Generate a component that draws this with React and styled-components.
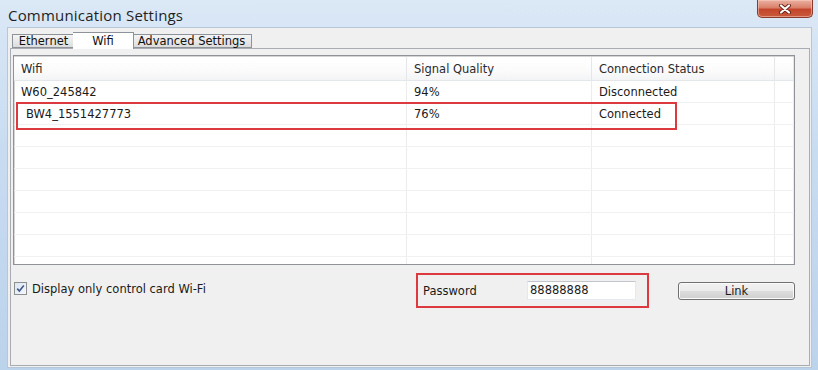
import React from 'react';
import styled, { createGlobalStyle } from 'styled-components';

const GlobalStyle = createGlobalStyle`
    body {
        margin: 0;
        background: #ffffff;
        font-family: "DejaVu Sans", "Liberation Sans", sans-serif;
    }
`

const networks = [
    { name: 'W60_245842', signal: '94%', status: 'Disconnected', indent: 0 },
    { name: 'BW4_1551427773', signal: '76%', status: 'Connected', indent: 5 },
]

function App() {
    const empty = Array.from({ length: 7 });

    return (
        <>
            <GlobalStyle />
            <Window>
                <TitleBar>
                    <Title>Communication Settings</Title>
                    <CloseButton>
                        <svg width="16" height="10" viewBox="0 0 16 10">
                            <path d="M4 1.5 L12 8.5 M12 1.5 L4 8.5" stroke="#6b2114" strokeWidth="4" strokeLinecap="round" />
                            <path d="M4 1.5 L12 8.5 M12 1.5 L4 8.5" stroke="#ffffff" strokeWidth="2.2" strokeLinecap="round" />
                        </svg>
                    </CloseButton>
                </TitleBar>

                <Body>
                    <TabStrip>
                        <Tab $width={63}>Ethernet</Tab>
                        <Tab $width={57} $active>Wifi</Tab>
                        <Tab $width={120}>Advanced Settings</Tab>
                    </TabStrip>

                    <TabPage>
                        <ListView>
                            <HeaderRow>
                                <HeaderCell>Wifi</HeaderCell>
                                <HeaderCell>Signal Quality</HeaderCell>
                                <HeaderCell>Connection Status</HeaderCell>
                                <HeaderCell />
                            </HeaderRow>
                            {networks.map((n) => (
                                <Row key={n.name}>
                                    <Cell $indent={n.indent}>{n.name}</Cell>
                                    <Cell>{n.signal}</Cell>
                                    <Cell>{n.status}</Cell>
                                    <Cell />
                                </Row>
                            ))}
                            {empty.map((_, i) => (
                                <Row key={i}>
                                    <Cell />
                                    <Cell />
                                    <Cell />
                                    <Cell />
                                </Row>
                            ))}
                        </ListView>

                        <BottomRow>
                            <CheckLabel>
                                <CheckBox>
                                    <svg width="9" height="9" viewBox="0 0 9 9">
                                        <path d="M1.2 4.6 L3.4 7 L7.8 1.6" fill="none" stroke="#3f5a8a" strokeWidth="1.6" />
                                    </svg>
                                </CheckBox>
                                Display only control card Wi-Fi
                            </CheckLabel>
                            <FieldLabel>Password</FieldLabel>
                            <TextInput>88888888</TextInput>
                            <Button>Link</Button>
                        </BottomRow>
                    </TabPage>
                </Body>

                {/* red annotation frames */}
                <Highlight style={{ left: 16, top: 102, width: 661, height: 28 }} />
                <Highlight style={{ left: 416, top: 273, width: 233, height: 35 }} />
            </Window>
        </>
    )
}

export default App

const Window = styled.div`
    position: relative;
    width: 818px;
    height: 370px;
    box-sizing: border-box;
    display: flex;
    flex-direction: column;
    background: linear-gradient(180deg, #dbe8f6 0%, #c8dcf1 40%, #bcd3ec 100%);
    padding: 0 6px 2px 7px;
    overflow: hidden;
`

const TitleBar = styled.div`
    height: 27px;
    display: flex;
    align-items: flex-start;
    margin-right: -1px;
`

const Title = styled.div`
    font-family: "Open Sans", "DejaVu Sans", sans-serif;
    font-size: 15px;
    color: #1f1f1f;
    margin-top: 5px;
    margin-left: 1px;
    letter-spacing: 0.2px;
`

const CloseButton = styled.div`
    margin-left: auto;
    width: 56px;
    height: 18px;
    box-sizing: border-box;
    display: flex;
    align-items: center;
    justify-content: center;
    border: 1px solid #8a3a2a;
    border-top: none;
    border-radius: 0 0 5px 5px;
    background: linear-gradient(180deg, #eab2a2 0%, #d9806a 45%, #c4452b 55%, #c85a3c 100%);
    box-shadow: inset 0 0 0 1px rgba(255, 210, 200, 0.5);
`

const Body = styled.div`
    flex: 1;
    display: flex;
    flex-direction: column;
    background: #f0f0f0;
    border: 1px solid #b6c7da;
    padding: 4px 1px 1px 2px;
`

const TabStrip = styled.div`
    display: flex;
    align-items: flex-end;
    height: 16px;
    padding-left: 2px;
    position: relative;
    z-index: 1;
`

const Tab = styled.div`
    width: ${(p) => p.$width + (p.$active ? 4 : 0)}px;
    height: ${(p) => (p.$active ? '17px' : '14px')};
    box-sizing: border-box;
    margin: ${(p) => (p.$active ? '0 -2px -1px' : '0')};
    display: flex;
    align-items: center;
    justify-content: center;
    font-size: 11.5px;
    color: #111;
    border: 1px solid #8e9399;
    border-bottom: ${(p) => (p.$active ? 'none' : '1px solid #8e9399')};
    background: ${(p) => (p.$active ? '#ffffff' : 'linear-gradient(180deg, #f4f4f4 0%, #e9e9e9 50%, #dcdcdc 100%)')};
    z-index: ${(p) => (p.$active ? 2 : 1)};
    & + & {
        border-left: ${(p) => (p.$active ? '1px solid #8e9399' : 'none')};
    }
`

const TabPage = styled.div`
    flex: 1;
    display: flex;
    flex-direction: column;
    border: 1px solid #a9adb3;
    padding: 6px 0 0 2px;
`

const ListView = styled.div`
    width: 782px;
    height: 210px;
    box-sizing: border-box;
    overflow: hidden;
    background: #ffffff;
    border: 1px solid #8f9398;
    box-shadow: inset 1px 1px 0 #d4d4d4;
`

const columns = '393px 185px 183px 1fr'

const HeaderRow = styled.div`
    display: grid;
    grid-template-columns: ${columns};
    height: 24px;
    margin-top: 1px;
    background: linear-gradient(180deg, #ffffff 0%, #fbfbfc 60%, #f3f4f5 100%);
    border-bottom: 1px solid #e3e6ea;
    box-sizing: border-box;
`

const HeaderCell = styled.div`
    display: flex;
    align-items: center;
    padding-left: 7px;
    font-size: 11.5px;
    color: #2a2a2a;
    border-right: 1px solid #e4e6e9;
`

const Row = styled.div`
    display: grid;
    grid-template-columns: ${columns};
    height: 22px;
    box-sizing: border-box;
    border-bottom: 1px solid #f1f1f1;
`

const Cell = styled.div`
    display: flex;
    align-items: center;
    padding-left: ${(p) => 7 + (p.$indent || 0)}px;
    font-size: 11.5px;
    color: #1a1a1a;
    border-right: 1px solid #ececec;
    white-space: nowrap;
`

const BottomRow = styled.div`
    display: flex;
    align-items: center;
    height: 36px;
    margin-top: 7px;
`

const CheckLabel = styled.div`
    flex: 0 0 410px;
    display: flex;
    align-items: center;
    gap: 5px;
    padding-left: 1px;
    font-size: 11.5px;
    color: #1a1a1a;
    box-sizing: border-box;
    margin-top: -3px;
`

const CheckBox = styled.div`
    width: 13px;
    height: 13px;
    box-sizing: border-box;
    border: 1px solid #8e8f8f;
    background: linear-gradient(135deg, #dde6f3 0%, #f4f6fa 100%);
    display: flex;
    align-items: center;
    justify-content: center;
`

const FieldLabel = styled.div`
    flex: 0 0 104px;
    font-size: 11.5px;
    color: #1a1a1a;
    margin-top: 2px;
`

const TextInput = styled.div`
    width: 109px;
    height: 19px;
    box-sizing: border-box;
    background: #ffffff;
    border: 1px solid #e3e9ef;
    border-top-color: #c3c7cc;
    padding: 1px 0 0 2px;
    font-size: 11.5px;
    color: #1a1a1a;
`

const Button = styled.div`
    margin-left: 42px;
    width: 117px;
    height: 18px;
    box-sizing: border-box;
    border: 1px solid #707070;
    border-radius: 3px;
    background: linear-gradient(180deg, #f2f2f2 0%, #ebebeb 50%, #dddddd 51%, #cfcfcf 100%);
    box-shadow: inset 0 0 0 1px #fbfbfb;
    display: flex;
    align-items: center;
    justify-content: center;
    font-size: 11.5px;
    color: #1a1a1a;
    margin-top: 1px;
`

const Highlight = styled.div`
    position: absolute;
    box-sizing: border-box;
    border: 2px solid #dc3a3e;
    pointer-events: none;
`
